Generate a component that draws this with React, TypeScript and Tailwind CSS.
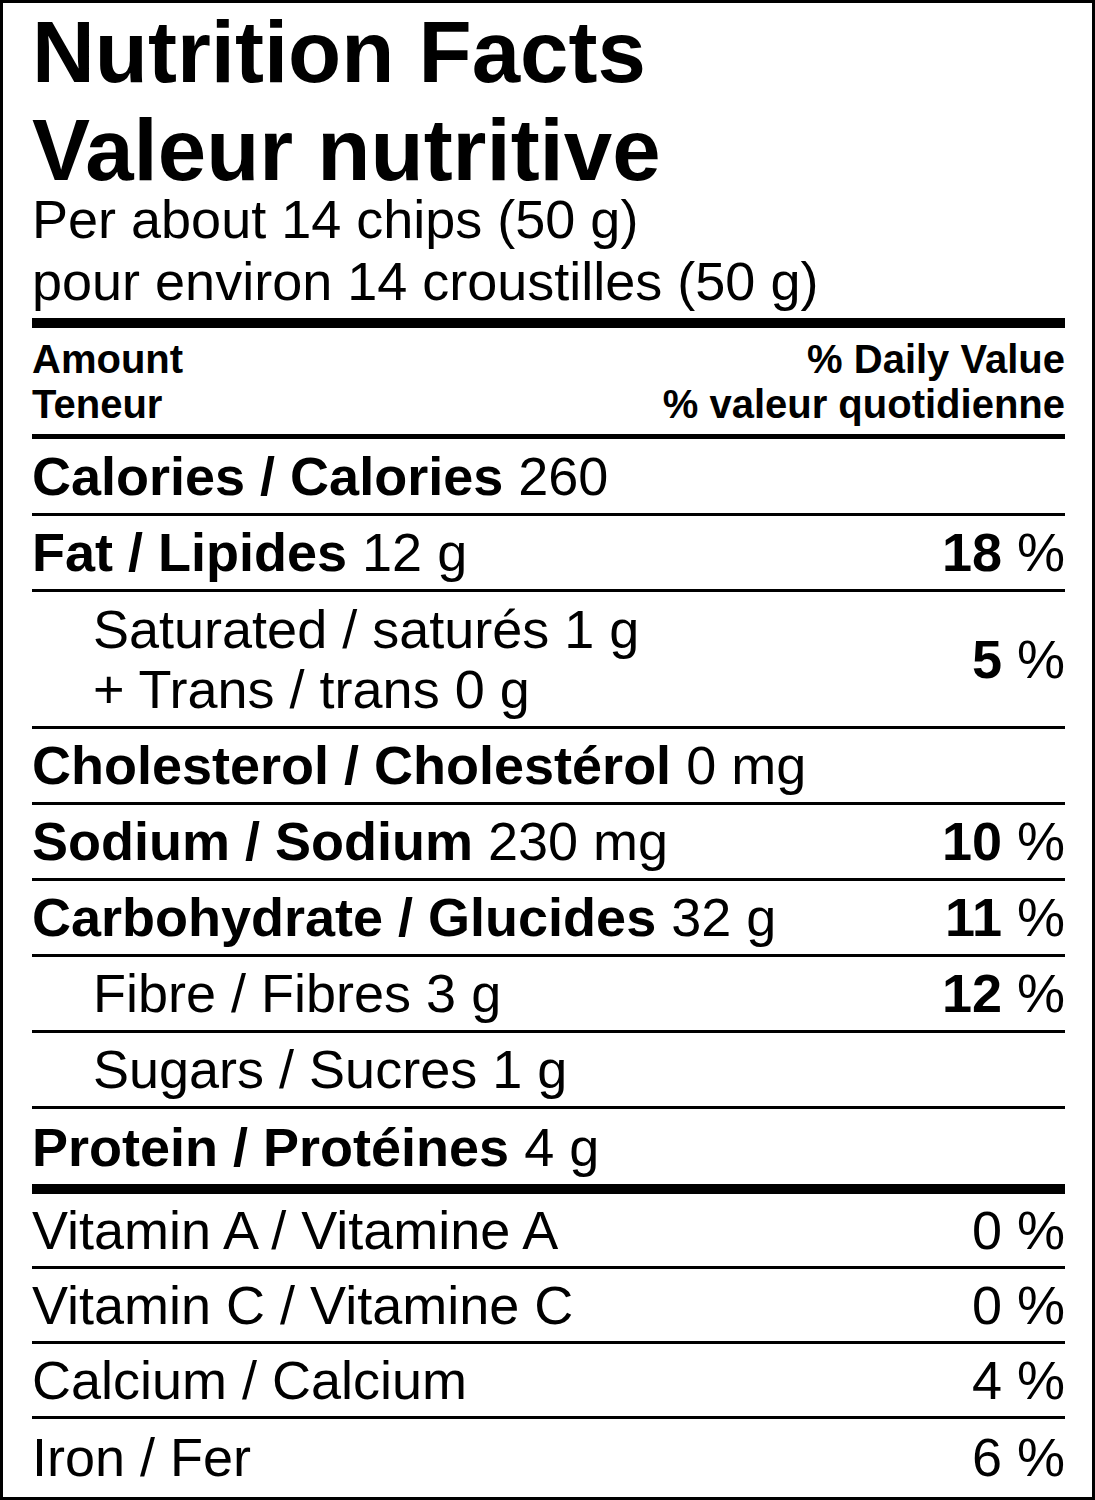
const nutrients = [
  { label: "Fat / Lipides", amount: "12 g", dv: "18" },
  { label: "Cholesterol / Cholestérol", amount: "0 mg" },
  { label: "Sodium / Sodium", amount: "230 mg", dv: "10" },
  { label: "Carbohydrate / Glucides", amount: "32 g", dv: "11" },
  { label: "Fibre / Fibres", amount: "3 g", dv: "12", sub: true },
  { label: "Sugars / Sucres", amount: "1 g", sub: true },
]

const vitamins = [
  { label: "Vitamin A / Vitamine A", dv: "0 %" },
  { label: "Vitamin C / Vitamine C", dv: "0 %" },
  { label: "Calcium / Calcium", dv: "4 %" },
  { label: "Iron / Fer", dv: "6 %" },
]

function Percent({ value }: { value?: string }) {
  if (!value) return null
  return (
    <span>
      <span className="font-bold">{value}</span> %
    </span>
  )
}

function NutrientRow({
  label,
  amount,
  dv,
  sub,
}: {
  label: string
  amount: string
  dv?: string
  sub?: boolean
}) {
  return (
    <div className="flex h-[76px] items-center justify-between border-b-[3px] border-black text-[54px] leading-[73px]">
      <div className={sub ? "pl-[61px]" : ""}>
        {sub ? label : <span className="font-bold">{label}</span>} {amount}
      </div>
      <Percent value={dv} />
    </div>
  )
}

export default function App() {
  return (
    <div className="box-border h-[1500px] w-[1095px] overflow-hidden border-[3px] border-black bg-white pl-[29px] pr-[27px] font-['Liberation_Sans',Arial,sans-serif] text-black">
      {/* title */}
      <div className="text-[87px] font-bold">
        <div className="leading-[98px]">Nutrition Facts</div>
        <div className="mt-[5px] leading-[87px]">Valeur nutritive</div>
      </div>
      <div className="text-[54px]">
        <div className="leading-[52px]">Per about 14 chips (50 g)</div>
        <div className="mt-[5px] leading-[62px]">pour environ 14 croustilles (50 g)</div>
      </div>
      <div className="mt-[6px] h-[10px] bg-black" />

      {/* column headings */}
      <div className="flex justify-between pb-[7px] pt-[9px] text-[40px] font-bold leading-[45px]">
        <div>
          <div>Amount</div>
          <div>Teneur</div>
        </div>
        <div className="text-right">
          <div>% Daily Value</div>
          <div>% valeur quotidienne</div>
        </div>
      </div>
      <div className="h-[5px] bg-black" />

      <div className="flex h-[77px] items-center border-b-[3px] border-black text-[54px] leading-[74px]">
        <span className="font-bold">Calories / Calories</span>&nbsp;260
      </div>

      <NutrientRow {...nutrients[0]} />
      <div className="flex h-[137px] items-center justify-between border-b-[3px] border-black text-[54px] leading-[60px]">
        <div className="pl-[61px]">
          <div>Saturated / saturés 1 g</div>
          <div>+ Trans / trans 0 g</div>
        </div>
        <Percent value="5" />
      </div>
      {nutrients.slice(1).map((n) => (
        <NutrientRow key={n.label} {...n} />
      ))}
      <div className="flex h-[75px] items-center text-[54px] leading-[74px]">
        <span className="font-bold">Protein / Protéines</span>&nbsp;4 g
      </div>
      <div className="h-[10px] bg-black" />

      {/* vitamins & minerals */}
      {vitamins.map((v, i) => (
        <div
          key={v.label}
          className={
            i < vitamins.length - 1
              ? "flex h-[75px] items-center justify-between border-b-[3px] border-black text-[54px] leading-[72px]"
              : "flex h-[75px] items-center justify-between text-[54px] leading-[72px]"
          }
        >
          <span>{v.label}</span>
          <span>{v.dv}</span>
        </div>
      ))}
    </div>
  )
}
